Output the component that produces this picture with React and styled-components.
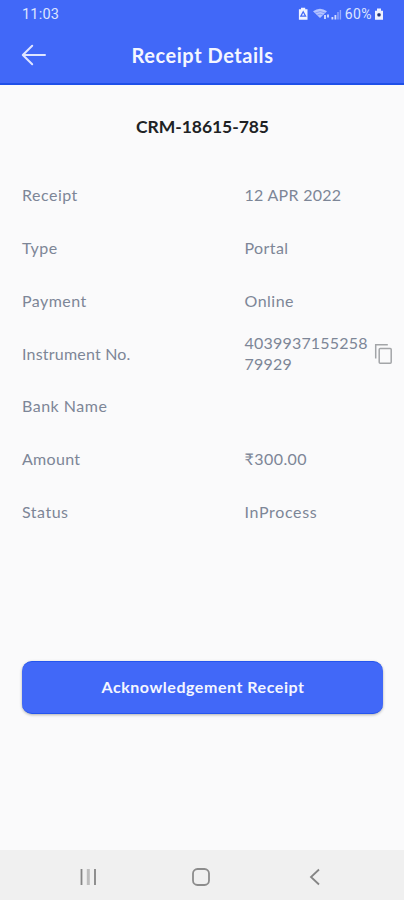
import React from "react";
import styled, { createGlobalStyle } from "styled-components";

const rows = [
    { label: "Receipt", value: "12 APR 2022", labelGap: 0.5, gap: 0.28 },
    { label: "Type", value: "Portal", labelGap: 0.5, gap: 0.4 },
    { label: "Payment", value: "Online", labelGap: 0.45, gap: 0.5 },
    { label: "Instrument No.", value: "403993715525879929", labelGap: 0.2, gap: 0.2, copy: true },
    { label: "Bank Name", value: "", labelGap: 0.5, gap: 0.5 },
    { label: "Amount", value: "₹300.00", labelGap: 0.3, gap: 0.45 },
    { label: "Status", value: "InProcess", labelGap: 0.5, gap: 0.65 },
];

const StatusIcons = () => (
    <svg width="46" height="14" viewBox="0 0 46 14">
        {/* battery saver */}
        <path d="M3 .8h4.2v1.4H9.5v10.6H.9V2.2H3z" fill="#f1f3ff" />
        <path d="M5.2 4.8l2.4 4.4H2.8z" fill="none" stroke="#4168f8" strokeWidth="1.2" />
        {/* wifi */}
        <path d="M15 4.2q7-5 14 0l-7 6.8z" fill="#b4c3ff" />
        <path d="M17.2 6q5-3 10 0M19.3 8q2.8-1.8 5.6 0" fill="none" stroke="#6f8bfb" strokeWidth=".7" />
        <path d="M27 8v4M30 7.5v3" stroke="#d5ddff" strokeWidth="1.8" />
        {/* signal */}
        <path d="M34.4 12.4V10M37.4 12.4V8" stroke="#d5ddff" strokeWidth="1.8" />
        <path d="M40 12.4V5M42.4 12.4V3" stroke="#93a8fd" strokeWidth="1.4" />
    </svg>
);

const LockedBattery = () => (
    <svg width="10" height="12" viewBox="0 0 10 12">
        <path d="M3 .5h4v2.2h2v9H1v-9h2z" fill="#eef1ff" />
        <rect x="3.4" y="5.3" width="3.2" height="3.2" rx="1" fill="#263776" />
    </svg>
);

const BackArrow = () => (
    <svg width="26" height="22" viewBox="0 0 26 22">
        <path d="M24 11H2M11.2 1.8L1.8 11l9.4 9.2" fill="none" stroke="#dfe5ff" strokeWidth="2" strokeLinecap="round" strokeLinejoin="round" />
    </svg>
);

const CopyIcon = () => (
    <svg width="20" height="22" viewBox="0 0 20 22">
        <path d="M1.7 15.5V1.7h12.1" fill="none" stroke="#a3a5a8" strokeWidth="1.5" />
        <rect x="5.2" y="5.5" width="12" height="14.7" rx="1" fill="none" stroke="#a3a5a8" strokeWidth="1.5" />
    </svg>
);

const App = () => {
    return (
        <Screen>
            <GlobalStyle />
            <Header>
                <StatusBar>
                    <Clock>11:03</Clock>
                    <StatusRight>
                        <StatusIcons />
                        <Percent>60%</Percent>
                        <LockedBattery />
                    </StatusRight>
                </StatusBar>
                <TitleBar>
                    <BackButton aria-label="Back"><BackArrow /></BackButton>
                    <Title>Receipt Details</Title>
                </TitleBar>
            </Header>
            <Content>
                <ReceiptNo>CRM-18615-785</ReceiptNo>
                <Details>
                    {rows.map((row) => (
                        <Row key={row.label}>
                            <Label $gap={row.labelGap}>{row.label}</Label>
                            <Value $gap={row.gap}>{row.value}</Value>
                            {row.copy && <CopyButton aria-label="Copy"><CopyIcon /></CopyButton>}
                        </Row>
                    ))}
                </Details>
                <SubmitButton>Acknowledgement Receipt</SubmitButton>
            </Content>
            <NavBar>
                <NavItem>
                    <svg width="18" height="18" viewBox="0 0 18 18">
                        <path d="M2.5 1v16M16 1v16" stroke="#858585" strokeWidth="1.8" />
                        <path d="M9.3 1v16" stroke="#bdbdbd" strokeWidth="3" />
                    </svg>
                </NavItem>
                <NavItem>
                    <svg width="20" height="20" viewBox="0 0 20 20">
                        <rect x="2" y="2" width="16" height="16" rx="4.5" fill="none" stroke="#8c8c8c" strokeWidth="1.8" />
                    </svg>
                </NavItem>
                <NavItem>
                    <svg width="18" height="18" viewBox="0 0 18 18">
                        <path d="M14 1.5L6 9l8 7.5" fill="none" stroke="#858585" strokeWidth="1.8" />
                    </svg>
                </NavItem>
            </NavBar>
        </Screen>
    );
};

export default App;

const GlobalStyle = createGlobalStyle`
    * {
        box-sizing: border-box;
    }
    body {
        margin: 0;
        background: #fafafb;
        font-family: Lato, "Noto Sans", sans-serif;
    }
    button {
        padding: 0;
        border: none;
        background: none;
        color: inherit;
        font-family: inherit;
    }
    svg {
        display: block;
        flex-shrink: 0;
    }
`;

const Screen = styled.div`
    display: flex;
    flex-direction: column;
    width: 404px;
    height: 900px;
    overflow: hidden;
    background: #fafafb;
`;

const Header = styled.header`
    height: 85px;
    background: #4168f8;
    border-bottom: 2px solid #1f50e8;
    color: #f4f6ff;
`;

const StatusBar = styled.div`
    display: flex;
    justify-content: space-between;
    align-items: center;
    height: 27px;
    padding: 0 20px 0 22px;
    font-family: Roboto, sans-serif;
    color: #dde4ff;
`;

const Clock = styled.span`
    padding-top: 1px;
    font-size: 14.5px;
    letter-spacing: 0.2px;
`;

const StatusRight = styled.div`
    display: flex;
    align-items: center;
`;

const Percent = styled.span`
    margin: 0 2px 0 1px;
    font-size: 14px;
    letter-spacing: 0.4px;
`;

const TitleBar = styled.div`
    display: grid;
    grid-template-columns: 60px 1fr 60px;
    align-items: center;
    height: 56px;
`;

const BackButton = styled.button`
    padding-left: 21px;
`;

const Title = styled.h1`
    margin: 0;
    padding-left: 1px;
    font-size: 20px;
    font-weight: 700;
    line-height: 24px;
    letter-spacing: 0.55px;
    text-align: center;
    white-space: nowrap;
`;

const Content = styled.main`
    flex: 1;
    display: flex;
    flex-direction: column;
    padding: 30px 21px 0 22px;
`;

const ReceiptNo = styled.h2`
    margin: 0 0 30.5px;
    font-size: 17.5px;
    font-weight: 700;
    line-height: 23px;
    letter-spacing: -0.05px;
    text-align: center;
    color: #202224;
`;

const Details = styled.div`
    margin-bottom: 123.5px;
`;

const Row = styled.div`
    display: grid;
    grid-template-columns: 222.5px 127px 1fr;
    align-items: center;
    height: 52.78px;
    font-size: 16px;
    line-height: 21px;
    color: #7d8697;
`;

const Label = styled.span`
    letter-spacing: ${(props) => props.$gap}px;
`;

const Value = styled.span`
    word-break: break-all;
    letter-spacing: ${(props) => props.$gap}px;
`;

const CopyButton = styled.button`
    margin: 2px 0 0 2px;
`;

const SubmitButton = styled.button`
    height: 53px;
    padding: 0 0 2px 1px;
    border: solid #2455ee;
    border-width: 1px 0;
    border-radius: 10px;
    background: #4168f8;
    box-shadow: 0 1px 3px rgba(0, 0, 0, 0.3);
    color: #f4f6ff;
    font-size: 16px;
    font-weight: 700;
    letter-spacing: 0.54px;
`;

const NavBar = styled.nav`
    display: flex;
    justify-content: space-between;
    align-items: center;
    height: 50px;
    padding: 3px 81px 0 79px;
    background: #f0f0f0;
`;

const NavItem = styled.div`
    display: flex;
`;
